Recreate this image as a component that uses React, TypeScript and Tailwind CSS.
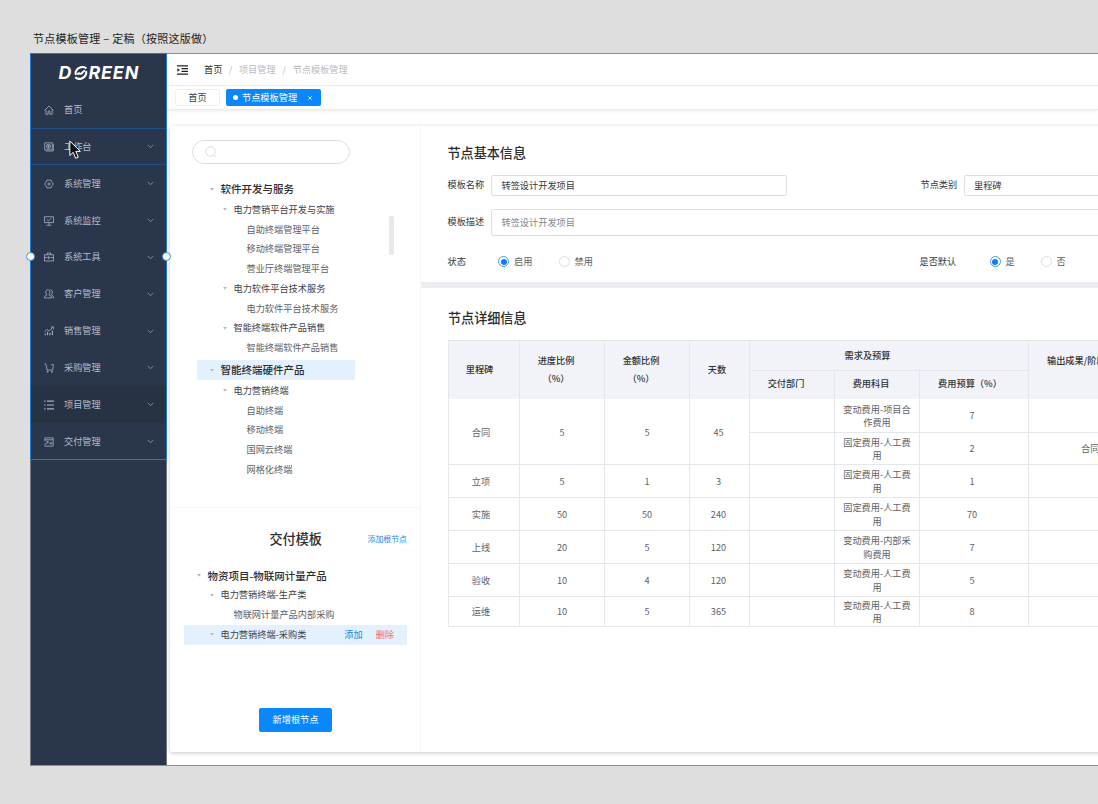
import type { ReactNode } from 'react';
import clsx from 'clsx';

const MENU = [
  { label: '首页', icon: 'home' },
  { label: '工作台', icon: 'desk' },
  { label: '系统管理', icon: 'gear' },
  { label: '系统监控', icon: 'monitor' },
  { label: '系统工具', icon: 'toolbox' },
  { label: '客户管理', icon: 'users' },
  { label: '销售管理', icon: 'chart' },
  { label: '采购管理', icon: 'cart' },
  { label: '项目管理', icon: 'list' },
  { label: '交付管理', icon: 'deliver' },
];

const ICONS: Record<string, ReactNode> = {
  home: <path d="M.8 7.600 7 1.400l6.200 6.200M2.600 6v7h3.200V9.200a1.200 1.200 0 0 1 2.400 0V13h3.200V6" />,
  desk: (
    <>
      <path d="M1 1.200h10.600v9.800H1zM13.100 2.600v10H2.400" />
      <circle cx="6.300" cy="6.100" r="3" />
      <path d="M4.700 5.400h3.200M4.700 7h3.200M6.300 4.400V8" />
    </>
  ),
  gear: (
    <>
      <path d="M4 1.600h6l.9 2.300 2.200 3.100-2.200 3.100-.9 2.300H4l-.9-2.300L.9 7l2.200-3.100z" />
      <circle cx="7" cy="7" r="1.600" />
    </>
  ),
  monitor: <path d="M.7 1h12.600v8.200H.7zM3.800 4.800l2.200 2 4.200-3.800M7 9.200v3.600M3.600 13h6.800" />,
  toolbox: <path d="M.7 3.800h12.600v8.800H.7zM4.600 3.800V1.400h4.800v2.400M.7 7.800h4.300M9 7.800h4.300M6 6.200l2.200 1.700L6 9.600z" />,
  users: (
    <>
      <path d="M5.400 1c1.900 0 3 1.400 3 3.200 0 1.500-.6 2.600-1.300 3.200v1l2.700 1.500c.6.500.8 1.500.8 2.600H.7c0-1.100.1-2.100.7-2.600l2.500-1.500v-1C3.100 6.800 2.500 5.700 2.500 4.200 2.500 2.400 3.600 1 5.400 1z" />
      <path d="M8.900 1.200c1.800.1 2.800 1.400 2.800 3 0 1.400-.6 2.500-1.200 3.100v1l2.100 1.400c.6.500.8 1.700.8 2.800h-1.200" />
    </>
  ),
  chart: (
    <>
      <path d="M.8 8.200 4.400 4.800l2.800 2.100 5.400-5.300M9.600 1.300h3.500v3.500" />
      <path d="M1.800 10.400V13M5 8v5M8.300 9.500V13M11.700 6.300V13" strokeWidth="1.500" />
    </>
  ),
  cart: (
    <>
      <path d="M.6 1.200h2l1.700 8.600h7.800l1.100-7.400H9.800" />
      <circle cx="5" cy="12.200" r=".9" />
      <circle cx="11.200" cy="12.200" r=".9" />
    </>
  ),
  list: <path d="M4.200 1.600H14M4.200 7H14M4.200 12.400H14M.2 1.600h2M.2 7h2M.2 12.400h2" strokeWidth="1.600" />,
  deliver: <path d="M1.200 6V1.200h11.600v11.600H1.200v-1.500M1.200 3.900h11.600M.6 9.800h2.600L5.400 6.300M3.400 6h2.300v2.300M7.200 8.800h3.600M9.300 6.800l1.900 2-1.900 2" />,
};

function MenuIcon({ name }: { name: string }) {
  return (
    <svg viewBox="0 0 14 14" className="w-[10px] h-[10px] shrink-0" fill="none" stroke="#a9b4c4" strokeWidth="1.100">
      {ICONS[name]}
    </svg>
  );
}

function Logo() {
  return (
    <div className="flex items-center h-[37.500px] pl-[27.500px] text-white font-[Inter] text-[17.800px] font-bold italic leading-none">
      <span className="inline-block w-[15px]">D</span>
      <svg viewBox="0 0 14 14" className="w-[14px] h-[14px]" fill="none" stroke="white">
        <path d="M12.300 2.600C9.500-.3 3.600 1 1.800 5.600c-.4 1.300-.2 2.400.4 3.200M1.300 11.300c3 3 8.800 1.600 10.700-2.900.4-1.300.3-2.500-.2-3.300" strokeWidth="2.100" />
        <path d="M3.400 8.600C4.800 5.600 6.300 9 8 7.200c1-1.100 1.300-2.600 3-2.200" strokeWidth="2" />
      </svg>
      <span className="ml-px tracking-[0.900px]">REEN</span>
    </div>
  );
}

function Sidebar() {
  return (
    <aside className="relative w-[137px] shrink-0 bg-[#2a364b] border-x border-[#6f7680]">
      <Logo />
      {MENU.map((item, i) => (
        <div
          key={item.label}
          className={clsx(
            'flex items-center h-[36.860px] pl-[13px] pr-[12px] text-[9.200px] text-[#b3bccb]',
            i === 1 && 'border-y border-[#1f4f86]',
            item.icon === 'list' && 'bg-[#273343]',
          )}
        >
          <MenuIcon name={item.icon} />
          <span className="ml-[10px] flex-1">{item.label}</span>
          {i > 0 && (
            <svg viewBox="0 0 8 6" className="w-[7px] h-[5px]" fill="none" stroke="#8b96a8" strokeWidth="1">
              <path d="M.8 1 4 4.500 7.200 1" />
            </svg>
          )}
        </div>
      ))}
      {/* selection frame with its two side handles */}
      <div className="absolute -left-px -right-px -top-px h-[407px] border border-[#1b7ad6]">
        <i className="absolute -left-[5px] top-[198px] w-[9px] h-[9px] rounded-full bg-white border border-[#3f8fdd]" />
        <i className="absolute -right-[5px] top-[198px] w-[9px] h-[9px] rounded-full bg-white border border-[#3f8fdd]" />
      </div>
      <svg viewBox="0 0 12 20" className="absolute left-[38px] top-[86px] w-[12px] h-[20px]">
        <path d="M.8 1v14.500l3.400-3.200 2.400 6 2.700-1.100-2.500-5.800h4.600z" fill="#111" stroke="#fff" strokeWidth="1" />
      </svg>
    </aside>
  );
}

function Header() {
  return (
    <>
      <div className="flex items-center h-[32px] pt-px pl-[10px] border-b border-[#efeff1] text-[9.200px] text-[#b9bcc3]">
        <svg viewBox="0 0 11 10" className="w-[11px] h-[10px]" stroke="#222" strokeWidth="1.200" fill="#222">
          <path d="M0 .8h11M4.500 3.600H11M4.500 6.400H11M0 9.200h11" />
          <path d="M.4 3.200v3.600L3 5z" stroke="none" />
        </svg>
        <span className="ml-[16px] text-[#303133]">首页</span>
        <span className="w-[16.500px] text-center">/</span>
        <span>项目管理</span>
        <span className="w-[17px] text-center">/</span>
        <span>节点模板管理</span>
      </div>
      <div className="flex items-center h-[24px] pl-[8px] gap-[6px] text-[9.200px] border-b border-[#ececef] shadow-[0_1px_3px_rgba(0,0,0,0.080)]">
        <div className="flex items-center justify-center w-[45px] h-[17px] border border-[#eeeff2] rounded-[2px] text-[#444]">首页</div>
        <div className="flex items-center w-[95px] h-[17px] pl-[7px] rounded-[2px] bg-[#0a87fb] text-white">
          <i className="w-[5px] h-[5px] rounded-full bg-white mr-[4px]" />
          <span>节点模板管理</span>
          <svg viewBox="0 0 4 4" className="w-[4px] h-[4px] ml-[11px]" stroke="white" strokeWidth=".8">
            <path d="M.3.3l3.400 3.400M3.700.3.3 3.700" />
          </svg>
        </div>
      </div>
    </>
  );
}

const TREE = [
  { level: 1, text: '软件开发与服务' },
  { level: 2, text: '电力营销平台开发与实施' },
  { level: 3, text: '自助终端管理平台' },
  { level: 3, text: '移动终端管理平台' },
  { level: 3, text: '营业厅终端管理平台' },
  { level: 2, text: '电力软件平台技术服务' },
  { level: 3, text: '电力软件平台技术服务' },
  { level: 2, text: '智能终端软件产品销售' },
  { level: 3, text: '智能终端软件产品销售' },
  { level: 1, text: '智能终端硬件产品', active: true },
  { level: 2, text: '电力营销终端' },
  { level: 3, text: '自助终端' },
  { level: 3, text: '移动终端' },
  { level: 3, text: '国网云终端' },
  { level: 3, text: '网格化终端' },
];

const DELIVERY_TREE = [
  { level: 1, text: '物资项目-物联网计量产品' },
  { level: 2, text: '电力营销终端-生产类' },
  { level: 3, text: '物联网计量产品内部采购' },
  { level: 2, text: '电力营销终端-采购类', active: true },
];

function TreeRow({ level, text, active, children }: { level: number; text: string; active?: boolean; children?: ReactNode }) {
  return (
    <div
      className={clsx(
        'flex items-center whitespace-nowrap',
        level === 1 && 'h-[20px] pl-[13px] text-[10.500px] font-medium text-[#2b2d31]',
        level === 2 && 'h-[19.750px] pl-[26px] text-[9.200px] text-[#3f4146]',
        level === 3 && 'h-[19.750px] pl-[50px] text-[9.200px] text-[#606266]',
        active && 'bg-[#e3f1ff] rounded-[2px]',
      )}
    >
      {level < 3 && (
        <svg viewBox="0 0 5 4" className="w-[4px] h-[3px] mr-[7px]" fill="#b4b7bd">
          <path d="M0 0h5L2.500 3.600z" />
        </svg>
      )}
      <span>{text}</span>
      {children}
    </div>
  );
}

function LeftPanel() {
  return (
    <div className="w-[251px] shrink-0 flex flex-col border-r border-[#f5f5f8]">
      <div className="h-[382px] border-b border-[#f8f8fa] pt-[14px] flex flex-col">
        <div className="ml-[22px] w-[158px] h-[24px] rounded-full border border-[#dcdfe3] flex items-center pl-[12px]">
          <svg viewBox="0 0 12 12" className="w-[12px] h-[12px]" fill="none" stroke="#d5d7db" strokeWidth=".9">
            <circle cx="5.500" cy="5.500" r="4.700" />
            <path d="m9 9 2.200 2.200" />
          </svg>
        </div>
        <div className="flex mt-[15px]">
          <div className="ml-[26.500px] w-[158px]">
            {TREE.map((row, i) => (
              <div key={i} className={row.active ? 'pt-[2px] pb-px' : i === 0 ? 'pb-px' : undefined}>
                <TreeRow {...row} />
              </div>
            ))}
          </div>
          <div className="mt-[37px] ml-[34.500px] w-[5px] h-[39px] rounded-[2px] bg-[#e8e8ea]" />
        </div>
      </div>
      <div className="flex items-center h-[20px] mt-[21px] pr-[13px]">
        <h3 className="ml-[99.500px] flex-1 text-[13.100px] font-medium text-[#2b2d31]">交付模板</h3>
        <a className="text-[7.900px] text-[#1788ea]">添加根节点</a>
      </div>
      <div className="mt-[16.500px] ml-[13.500px] mr-[13px]">
        {DELIVERY_TREE.map((row) => (
          <TreeRow key={row.text} {...row}>
            {row.active && (
              <span className="ml-auto mr-[13px] flex gap-[13px]">
                <span className="text-[#1788ea]">添加</span>
                <span className="text-[#ee6b70]">删除</span>
              </span>
            )}
          </TreeRow>
        ))}
      </div>
      <button className="mt-[63px] ml-[89px] w-[73px] h-[24px] rounded-[2px] bg-[#0a87fb] text-white text-[9.200px]">
        新增根节点
      </button>
    </div>
  );
}

function Radio({ checked, label }: { checked?: boolean; label: string }) {
  return (
    <span className="flex items-center gap-[5px] text-[#5c5e63]">
      <i className={clsx('flex items-center justify-center w-[11px] h-[11px] rounded-full border', checked ? 'border-[#3d9bfb]' : 'border-[#dcdee2]')}>
        {checked && <i className="w-[6px] h-[6px] rounded-full bg-[#0a80f5]" />}
      </i>
      {label}
    </span>
  );
}

function BasicInfo() {
  return (
    <section className="h-[156px] pl-[26.500px] pt-[17px] text-[9.200px] text-[#37393d]">
      <h2 className="h-[20px] leading-[20px] text-[13.100px] font-medium text-[#2b2d31]">节点基本信息</h2>
      <div className="flex mt-[12px] h-[21px] items-center">
        <span className="w-[43.500px] -mt-px">模板名称</span>
        <div className="w-[296px] h-[21px] flex items-center pl-[9.500px] border border-[#dddfe5] rounded-[2px]">转签设计开发项目</div>
        <span className="ml-[133.500px] w-[43px] -mt-px">节点类别</span>
        <div className="w-[220px] shrink-0 h-[21px] flex items-center pl-[9.500px] border border-[#dddfe5] rounded-[2px]">里程碑</div>
      </div>
      <div className="flex mt-[13px] h-[27px] items-center">
        <span className="w-[43.500px] shrink-0 -mt-px">模板描述</span>
        <div className="w-[700px] shrink-0 h-[27px] flex items-center pl-[9.500px] border border-[#dddfe5] rounded-[2px] text-[#85878c]">
          转签设计开发项目
        </div>
      </div>
      <div className="flex mt-[16px] h-[20px] items-center">
        <span className="w-[50.500px]">状态</span>
        <div className="w-[60.500px]"><Radio checked label="启用" /></div>
        <div className="w-[361px]"><Radio label="禁用" /></div>
        <span className="w-[70px]">是否默认</span>
        <div className="w-[51px]"><Radio checked label="是" /></div>
        <Radio label="否" />
      </div>
    </section>
  );
}

const STAGES = [
  { name: '合同', progress: 5, amount: 5, days: 45, items: [['变动费用-项目合作费用', 7], ['固定费用-人工费用', 2, '合同']] },
  { name: '立项', progress: 5, amount: 1, days: 3, items: [['固定费用-人工费用', 1]] },
  { name: '实施', progress: 50, amount: 50, days: 240, items: [['固定费用-人工费用', 70]] },
  { name: '上线', progress: 20, amount: 5, days: 120, items: [['变动费用-内部采购费用', 7]] },
  { name: '验收', progress: 10, amount: 4, days: 120, items: [['变动费用-人工费用', 5]] },
  { name: '运维', progress: 10, amount: 5, days: 365, items: [['变动费用-人工费用', 8]] },
];

function Cell({ className, children }: { className?: string; children?: ReactNode }) {
  return (
    <div className={clsx('flex items-center justify-center text-center border-r border-b border-[#e6e7ea]', className)}>
      {children}
    </div>
  );
}

function DetailTable() {
  return (
    <div className="w-[760px] grid grid-cols-[71px_85px_85px_60px_85px_85px_109px_179px] grid-rows-[30px_28px_34px_32px_33px_33px_33px_33px_30px] border-t border-l border-[#e6e7ea] text-[9.200px] leading-[13.300px] text-[#606266]">
      <div className="contents font-medium text-[#303236]">
        <Cell className="row-span-2 border-b-0 bg-[#f2f3f8] pr-[9px]">里程碑</Cell>
        <Cell className="row-span-2 border-b-0 bg-[#f2f3f8] pr-[12px] pb-[2px] leading-[18px]">进度比例<br />（%）</Cell>
        <Cell className="row-span-2 border-b-0 bg-[#f2f3f8] pr-[12px] pb-[2px] leading-[18px]">金额比例<br />（%）</Cell>
        <Cell className="row-span-2 border-b-0 bg-[#f2f3f8] pr-[5px]">天数</Cell>
        <Cell className="col-span-3 bg-[#f2f3f8] pr-[43px]">需求及预算</Cell>
        <div className="row-span-2 bg-[#f2f3f8] pl-[18px] pt-[13px] whitespace-nowrap">输出成果/阶段</div>
        <Cell className="border-b-0 bg-[#f2f3f8] pr-[12px] pb-[3px]">交付部门</Cell>
        <Cell className="border-b-0 bg-[#f2f3f8] pr-[12px] pb-[3px]">费用科目</Cell>
        <Cell className="border-b-0 bg-[#f2f3f8] pr-[8px] pb-[3px]">费用预算（%）</Cell>
      </div>
      {STAGES.map((s) => {
        const span = s.items.length > 1 ? 'row-span-2' : '';
        const shift = s.name !== '运维' && 'pt-[2px]';
        return (
          <div key={s.name} className="contents">
            <Cell className={clsx(span, shift, 'pr-[6px]')}>{s.name}</Cell>
            <Cell className={clsx(span, shift)}>{s.progress}</Cell>
            <Cell className={clsx(span, shift)}>{s.amount}</Cell>
            <Cell className={clsx(span, shift, 'pr-[2px]')}>{s.days}</Cell>
            {s.items.map(([subject, budget, output], i) => (
              <div key={i} className="contents">
                <Cell />
                <Cell className="px-[6px] pt-px">{subject}</Cell>
                <Cell className={clsx(span ? 'pt-px' : shift, 'pr-[4px]')}>{budget}</Cell>
                <Cell className="justify-start pl-[52px]">{output}</Cell>
              </div>
            ))}
          </div>
        );
      })}
    </div>
  );
}

export default function App() {
  return (
    <div className="w-full h-[804px] overflow-hidden bg-[#dedede] font-['Noto_Sans_CJK_SC',sans-serif]">
      <div className="h-[53px] pl-[33px] pt-[30px] text-[11px] leading-[16px] tracking-[0.260px] text-[#1c1c1c] whitespace-nowrap">
        节点模板管理 – 定稿（按照这版做）
      </div>
      <div className="flex ml-[30px] h-[713px] border-y border-[#8e8e8e] bg-white">
        <Sidebar />
        <main className="flex-1 min-w-0 flex flex-col overflow-hidden">
          <Header />
          <div className="flex w-[1200px] ml-[3px] mt-[16px] h-[626px] bg-white shadow-[0_1px_4px_rgba(0,0,0,0.220)] rounded-[2px]">
            <LeftPanel />
            <div className="flex-1">
              <BasicInfo />
              <div className="h-[6px] bg-[#ececf1]" />
              <section className="pl-[27px] pt-[20px]">
                <h2 className="h-[20px] leading-[20px] mb-[12px] text-[13.100px] font-medium text-[#2b2d31]">节点详细信息</h2>
                <DetailTable />
              </section>
            </div>
          </div>
        </main>
      </div>
    </div>
  );
}
